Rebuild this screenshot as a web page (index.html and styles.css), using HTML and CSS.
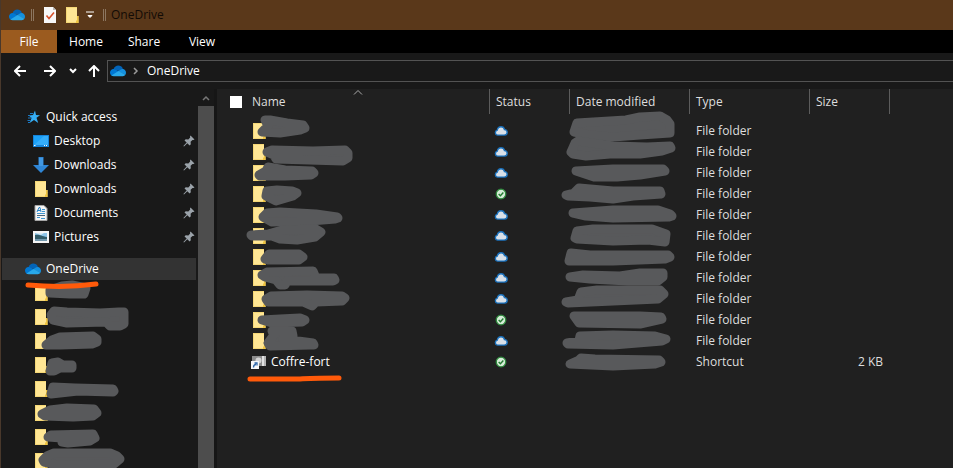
FILE: index.html
```html
<!DOCTYPE html>
<html lang="en">
<head>
    <meta charset="utf-8">
    <title>OneDrive</title>
    <link rel="stylesheet" href="styles.css">
</head>
<body>

<svg class="defs" aria-hidden="true">
    <symbol id="onedrive" viewBox="0 0 16 16">
        <path d="M3.5 6.2C4.3 3.8 6.2 2.5 8.3 2.5c2 0 3.800 1.100 4.600 3.200L9 8z" fill="#0364b8"/>
        <path d="M0 9.600C0 7.500 1.600 6 3.600 6c1 0 1.700.2 2.400.7L10 9l-8 4C.8 12.400 0 11.200 0 9.600z" fill="#0078d4"/>
        <path d="M8 8.300l3.200-2c2.600-1.200 4.800.9 4.800 3.500 0 .8-.2 1.400-.6 2z" fill="#1490df"/>
        <path d="M1.400 12.500L8.600 8l6.900 3.800c-.6.900-1.500 1.400-2.700 1.400H3.700c-.9 0-1.700-.2-2.300-.7z" fill="#28a8ea"/>
    </symbol>
    <symbol id="folder" viewBox="0 0 16 16">
        <path d="M2 0h11v9h1.500v7H2z" fill="#ffe694"/>
        <path d="M2 0h11v1H3v14h10v1H2z" fill="#f5d776"/>
        <path d="M13 9h1.500v7H12v-2l1-1z" fill="#f0c43f"/>
    </symbol>
    <symbol id="checkdoc" viewBox="0 0 16 16">
        <path d="M2 0h9l3 3v13H2z" fill="#f8f8f8"/>
        <path d="M11 0l3 3h-3z" fill="#b9b9b9"/>
        <path d="M4.500 8.500l2.500 3 5-6" fill="none" stroke="#d8512b" stroke-width="1.600"/>
    </symbol>
    <symbol id="star" viewBox="0 0 16 16">
        <path d="M10 1.500l1 4.500 4 .2-3.500 2.600 1.700 5.200L9 11l-4.400 3 1.900-4.700L4 6.500l4-.4z" fill="#35aef5"/>
        <path d="M5 4.500h3M3 6.500h3M3 9h4M2.500 11.500h3M3 13.500h2" stroke="#1b78c2"/>
    </symbol>
    <symbol id="desktop" viewBox="0 0 16 16">
        <path d="M0 2h16v12H0z" fill="#1683d8"/>
        <path d="M1 3h14v9H1z" fill="#1ba1f8"/>
        <path d="M1 12L11 3h4v9z" fill="#35adfa"/>
        <path d="M1 12.500h1.500M11 12.500h1m1 0h1" stroke="#fff"/>
    </symbol>
    <symbol id="download" viewBox="0 0 16 16">
        <path d="M5.500 0h5v8H16l-8 8-8-8h5.500z" fill="#2f86d6"/>
        <path d="M6 1h4v8H6z" fill="#4198e3"/>
    </symbol>
    <symbol id="document" viewBox="0 0 16 16">
        <path d="M2 .5h9l3 3v12H2z" fill="#f4f4f4" stroke="#a5a5a5"/>
        <path d="M4 7l2-4.500h1L8 7M4.500 5.500h3" fill="none" stroke="#2583c9"/>
        <path d="M9 4.500h3M9 6.500h3M4 8.500h8M4 12.500h3M8 13.500h4" stroke="#3e94cf"/>
        <path d="M4 10.500h8" stroke="#4b6478"/>
    </symbol>
    <symbol id="picture" viewBox="0 0 16 16">
        <path d="M0 2h16v12H0z" fill="#f4f4f4"/>
        <path d="M2 4h12v8H2z" fill="#8dc4e8"/>
        <path d="M2 6c4-1 6 1 12 2v2H2z" fill="#315b68"/>
        <path d="M2 10h12v2H2z" fill="#7298ad"/>
        <path d="M2 4h9L8 6z" fill="#d7e9f3"/>
    </symbol>
    <symbol id="pin" viewBox="0 0 12 12">
        <path d="M7.500.5l4 4-1.200.6-.8-.2-1.900 1.900.2 2.500-1.200 1.200-2.300-2.300L1 11.500l-.6-.6 3.300-3.300-2.200-2.200 1.200-1.200 2.600.2L7.200 2.500 7 1.500z" fill="#9ba3aa"/>
    </symbol>
    <symbol id="cloud" viewBox="0 0 12 12">
        <path d="M3 9.500a2.200 2.200 0 0 1-.2-4.300C3.200 3.200 4.500 2.300 6 2.300c1.500 0 2.700 1 3 2.500 1.400.1 2.300 1 2.300 2.300 0 1.400-1 2.400-2.400 2.400z" fill="#d9e0e8" stroke="#1b72bd" stroke-width="1.200"/>
    </symbol>
    <symbol id="synced" viewBox="0 0 12 12">
        <circle cx="6" cy="6" r="4.100" fill="#d5ecd7" stroke="#2f8a3d" stroke-width="1.100"/>
        <path d="M4 6l1.500 1.500L8 4.700" fill="none" stroke="#237a31" stroke-width="1.200"/>
    </symbol>
    <symbol id="shortcut" viewBox="0 0 16 16">
        <path d="M1 2h14v10H1z" fill="#8d8d8d"/>
        <path d="M11 2h2v10h-2z" fill="#e2e2e2"/>
        <path d="M13 2h2v10h-2z" fill="#b5b5b5"/>
        <circle cx="7.500" cy="6.500" r="3" fill="#d6d6d6"/>
        <path d="M0 7h8v8H0z" fill="#f7f7f7"/>
        <path d="M2.500 13.500c0-2 .8-3 2.500-3M3.500 9H6v2.500" fill="none" stroke="#2e66a8" stroke-width="1.300"/>
    </symbol>
</svg>

<div class="window">
    <header class="titlebar">
        <svg class="icon"><use href="#onedrive"/></svg>
        <span class="divider"></span>
        <button class="quick" aria-label="Properties"><svg class="icon"><use href="#checkdoc"/></svg></button>
        <button class="quick" aria-label="New folder"><svg class="icon"><use href="#folder"/></svg></button>
        <button class="customize" aria-label="Customize toolbar">
            <svg width="8" height="8" viewBox="0 0 8 8"><path d="M0 1h8M2 4.500h4L4 6.500z" fill="#fff" stroke="#fff"/></svg>
        </button>
        <span class="divider"></span>
        <h1>OneDrive</h1>
    </header>

    <nav class="ribbon">
        <button class="tab file">File</button>
        <button class="tab">Home</button>
        <button class="tab">Share</button>
        <button class="tab">View</button>
    </nav>

    <div class="toolbar">
        <button class="nav" aria-label="Back"><svg width="12" height="12" viewBox="0 0 12 12"><path d="M12 6H1M6 1L1 6l5 5"/></svg></button>
        <button class="nav" aria-label="Forward"><svg width="12" height="12" viewBox="0 0 12 12"><path d="M0 6h11M6 1l5 5-5 5"/></svg></button>
        <button class="nav recent" aria-label="Recent locations"><svg width="8" height="6" viewBox="0 0 8 6"><path d="M1 1l3 3 3-3"/></svg></button>
        <button class="nav up" aria-label="Up"><svg width="12" height="12" viewBox="0 0 12 12"><path d="M6 12V1M1 6l5-5 5 5"/></svg></button>
        <div class="address">
            <svg class="icon"><use href="#onedrive"/></svg>
            <svg class="crumb" width="6" height="8" viewBox="0 0 6 8"><path d="M1 1l3 3-3 3"/></svg>
            <a href="#">OneDrive</a>
        </div>
    </div>

    <div class="body">
        <aside class="sidebar">
            <nav class="tree">
                <a href="#" class="root"><svg class="icon"><use href="#star"/></svg>Quick access</a>
                <a href="#"><svg class="icon"><use href="#desktop"/></svg>Desktop<svg class="pin"><use href="#pin"/></svg></a>
                <a href="#"><svg class="icon"><use href="#download"/></svg>Downloads<svg class="pin"><use href="#pin"/></svg></a>
                <a href="#"><svg class="icon"><use href="#folder"/></svg>Downloads<svg class="pin"><use href="#pin"/></svg></a>
                <a href="#"><svg class="icon"><use href="#document"/></svg>Documents<svg class="pin"><use href="#pin"/></svg></a>
                <a href="#"><svg class="icon"><use href="#picture"/></svg>Pictures<svg class="pin"><use href="#pin"/></svg></a>
                <a href="#" class="root selected"><svg class="icon"><use href="#onedrive"/></svg>OneDrive</a>
                <a href="#" aria-label="Folder"><svg class="icon"><use href="#folder"/></svg></a>
                <a href="#" aria-label="Folder"><svg class="icon"><use href="#folder"/></svg></a>
                <a href="#" aria-label="Folder"><svg class="icon"><use href="#folder"/></svg></a>
                <a href="#" aria-label="Folder"><svg class="icon"><use href="#folder"/></svg></a>
                <a href="#" aria-label="Folder"><svg class="icon"><use href="#folder"/></svg></a>
                <a href="#" aria-label="Folder"><svg class="icon"><use href="#folder"/></svg></a>
                <a href="#" aria-label="Folder"><svg class="icon"><use href="#folder"/></svg></a>
                <a href="#" aria-label="Folder"><svg class="icon"><use href="#folder"/></svg></a>
            </nav>
            <div class="scrollbar">
                <button aria-label="Scroll up"><svg width="8" height="6" viewBox="0 0 8 6"><path d="M1 5l3-3 3 3"/></svg></button>
                <div class="thumb"></div>
            </div>
        </aside>

        <main class="files">
            <table>
                <colgroup>
                    <col class="c-name"><col class="c-status"><col class="c-date"><col class="c-type"><col class="c-size"><col>
                </colgroup>
                <thead>
                    <tr>
                        <th class="name">
                            <div class="head"><input type="checkbox" id="all" aria-label="Select all"><label for="all">Name</label></div>
                            <svg class="sort" width="10" height="5" viewBox="0 0 10 5"><path d="M1 4.500l4-4 4 4"/></svg>
                        </th>
                        <th>Status</th>
                        <th>Date modified</th>
                        <th>Type</th>
                        <th>Size</th>
                        <td></td>
                    </tr>
                </thead>
                <tbody>
                    <tr><td class="name"><svg class="icon"><use href="#folder"/></svg></td><td><svg class="state"><use href="#cloud"/></svg></td><td></td><td>File folder</td><td></td><td></td></tr>
                    <tr><td class="name"><svg class="icon"><use href="#folder"/></svg></td><td><svg class="state"><use href="#cloud"/></svg></td><td></td><td>File folder</td><td></td><td></td></tr>
                    <tr><td class="name"><svg class="icon"><use href="#folder"/></svg></td><td><svg class="state"><use href="#cloud"/></svg></td><td></td><td>File folder</td><td></td><td></td></tr>
                    <tr><td class="name"><svg class="icon"><use href="#folder"/></svg></td><td><svg class="state"><use href="#synced"/></svg></td><td></td><td>File folder</td><td></td><td></td></tr>
                    <tr><td class="name"><svg class="icon"><use href="#folder"/></svg></td><td><svg class="state"><use href="#cloud"/></svg></td><td></td><td>File folder</td><td></td><td></td></tr>
                    <tr><td class="name"><svg class="icon"><use href="#folder"/></svg></td><td><svg class="state"><use href="#cloud"/></svg></td><td></td><td>File folder</td><td></td><td></td></tr>
                    <tr><td class="name"><svg class="icon"><use href="#folder"/></svg></td><td><svg class="state"><use href="#cloud"/></svg></td><td></td><td>File folder</td><td></td><td></td></tr>
                    <tr><td class="name"><svg class="icon"><use href="#folder"/></svg></td><td><svg class="state"><use href="#cloud"/></svg></td><td></td><td>File folder</td><td></td><td></td></tr>
                    <tr><td class="name"><svg class="icon"><use href="#folder"/></svg></td><td><svg class="state"><use href="#cloud"/></svg></td><td></td><td>File folder</td><td></td><td></td></tr>
                    <tr><td class="name"><svg class="icon"><use href="#folder"/></svg></td><td><svg class="state"><use href="#synced"/></svg></td><td></td><td>File folder</td><td></td><td></td></tr>
                    <tr><td class="name"><svg class="icon"><use href="#folder"/></svg></td><td><svg class="state"><use href="#cloud"/></svg></td><td></td><td>File folder</td><td></td><td></td></tr>
                    <tr><td class="name"><svg class="icon"><use href="#shortcut"/></svg><span>Coffre-fort</span></td><td><svg class="state"><use href="#synced"/></svg></td><td></td><td>Shortcut</td><td class="size">2 KB</td><td></td></tr>
                </tbody>
            </table>
        </main>
    </div>

    <!-- marker strokes drawn over the window -->
    <svg class="marks" aria-hidden="true">
        <g class="redact">
            <!-- sidebar folders -->
            <path d="M50 290L62 286 72 285 86 288 84 294 70 294 50 293z"/>
            <path d="M51 315L54 311 67 312 100 313 119 312 124 312 124 324 120 326 110 326 106 322 67 323 53 320z"/>
            <path d="M46 345L52 340 60 337 93 336 97 339 97 342 92 344 60 345z"/>
            <path d="M50 371L52 363 58 362 63 365 72 365 72 368 60 368 54 371z"/>
            <path d="M51 394L53 387 75 388 113 389 114 391 113 392 78 391z"/>
            <path d="M42 414L50 410 67 408 94 409 97 413 93 416 73 417 45 416z"/>
            <path d="M48 437L51 435 93 434 95 438 90 441 68 443 62 442 62 438z"/>
            <path d="M43 460L47 456 54 453 110 453 117 456 120 459 114 464 57 465 44 462z"/>
            <!-- names -->
            <path d="M262 132L268 126 265 120 270 120 287 123 303 125 305 128 300 130 280 133z"/>
            <path d="M267 152L272 150 313 151 345 150 348 153 348 158 343 161 276 159 274 155z"/>
            <path d="M259 175L266 171 268 167 285 170 312 171 314 173 311 175 285 176 260 176z"/>
            <path d="M266 196L267 191 277 190 292 191 297 193 293 196 276 201z"/>
            <path d="M263 217L267 213 280 212 316 214 337 217 338 218 335 219 310 221 272 222z"/>
            <path d="M251 235L268 234 282 230 316 229 321 232 315 237 297 240 280 239 272 236 252 236z"/>
            <path d="M265 259L269 254 299 254 303 257 299 260 268 260z"/>
            <path d="M262 275L267 272 313 271 316 278 334 278 335 280 333 281 287 281 285 285 280 285 276 280 265 277z"/>
            <path d="M266 299L271 296 307 295 342 296 345 298 342 301 316 302 312 306 303 302 268 302z"/>
            <path d="M262 320L280 319 300 318 305 320 302 322 272 323z"/>
            <path d="M272 331L292 331 293 336 283 339 313 343 314 345 310 345 270 346 268 343 274 335z"/>
            <!-- dates -->
            <path d="M574 132L577 123 626 120 640 117 660 116 667 120 670 124 670 133 640 135 613 137 590 135z"/>
            <path d="M571 152L575 143 578 141 613 146 647 147 670 146 671 148 662 151 640 154 610 154 586 156 573 154z"/>
            <path d="M576 171L613 169 663 169 665 171 640 175 617 177 594 177z"/>
            <path d="M566 195L574 193 579 188 613 191 660 191 661 194 633 196 613 199 590 197 568 196z"/>
            <path d="M573 213L613 210 658 210 670 214 672 216 669 217 613 218 586 216z"/>
            <path d="M575 238L577 231 593 229 652 229 666 234 665 242 648 240 613 241 577 239z"/>
            <path d="M569 261L571 253 590 255 613 255 668 255 670 257 665 259 613 261z"/>
            <path d="M570 277L583 275 620 276 640 273 663 273 663 277 658 281 628 281 590 279z"/>
            <path d="M566 302L578 300 581 292 597 290 660 290 664 294 658 299 613 301 568 303z"/>
            <path d="M574 316L640 316 661 317 662 319 640 324 579 323z"/>
            <path d="M567 343L579 341 580 336 613 335 655 336 666 339 662 341 613 345 568 344z"/>
            <path d="M570 364L579 360 581 358 595 359 659 360 661 362 655 364 613 366z"/>
        </g>
        <g class="underline">
            <path d="M28 285C50 287 74 287 96 284"/>
            <path d="M250 379H300C310 378 312 378 339 378"/>
        </g>
    </svg>
</div>

</body>
</html>
```

FILE: styles.css
```css
* {
    box-sizing: border-box;
}
body {
    margin: 0;
    background: #fff;
    color: #fff;
    font: 12px/16px "Open Sans", "Noto Sans", sans-serif;
}
button {
    display: flex;
    align-items: center;
    justify-content: center;
    margin: 0;
    padding: 0;
    border: 0;
    background: none;
    color: inherit;
    font: inherit;
}
a {
    color: inherit;
    text-decoration: none;
}
svg {
    flex: none;
}
.defs {
    position: absolute;
    width: 0;
    height: 0;
}
.icon {
    display: block;
    width: 16px;
    height: 16px;
}
.window {
    position: relative;
    display: flex;
    flex-direction: column;
    height: calc(100vh - 1px);
    overflow: hidden;
    border-left: 1px solid #49382b;
    background: #191919;
}

/* title bar */
.titlebar {
    display: flex;
    align-items: center;
    height: 30px;
    padding-left: 8px;
    background: #5a381a;
}
.divider {
    width: 3px;
    height: 12px;
    margin: 0 5px 0 6px;
    border: 1px solid #8c7660;
    border-width: 0 1px;
}
.quick {
    width: 22px;
    height: 24px;
}
.customize {
    width: 14px;
    height: 24px;
}
.titlebar h1 {
    margin: 0;
    color: #120b05;
    font-size: 12px;
    font-weight: normal;
}

/* ribbon tabs */
.ribbon {
    display: flex;
    height: 23px;
    background: #000;
}
.tab {
    width: 58px;
}
.tab.file {
    width: 56px;
    background: #9b5b1f;
}

/* navigation and address */
.toolbar {
    display: flex;
    align-items: center;
    height: 36px;
    padding-left: 4px;
}
.nav {
    width: 30px;
    height: 22px;
}
.nav.recent {
    width: 16px;
}
.nav.up {
    width: 26px;
}
.nav path {
    fill: none;
    stroke: #fff;
    stroke-width: 2;
}
.address {
    display: flex;
    flex: 1;
    align-items: center;
    height: 22px;
    padding-left: 2px;
    border: 1px solid #535353;
    border-right: 0;
}
.crumb {
    margin: 0 8px 0 7px;
}
.crumb path {
    fill: none;
    stroke: #9a9a9a;
    stroke-width: 1.5;
}

.body {
    display: flex;
    flex: 1;
    min-height: 0;
}

/* folder tree */
.sidebar {
    display: flex;
    width: 216px;
    border-right: 3px solid #161616;
}
.tree {
    flex: 1;
    padding: 16px 2px 0 1px;
    overflow: hidden;
}
.tree a {
    display: flex;
    align-items: center;
    gap: 5px;
    height: 24px;
    padding-left: 31px;
}
.tree .root {
    padding-left: 23px;
}
.tree .selected {
    margin-top: 8px;
    border: 1px solid #191919;
    border-width: 1px 0;
    background: #333;
}
.pin {
    width: 12px;
    height: 12px;
    margin: 0 1px 0 auto;
}
.scrollbar {
    display: flex;
    flex-direction: column;
    width: 16px;
}
.scrollbar button {
    height: 17px;
}
.scrollbar path {
    fill: none;
    stroke: #777;
    stroke-width: 1.5;
}
.thumb {
    flex: 1;
    background: #4d4d4d;
}

/* file list */
.files {
    flex: 1;
    min-width: 0;
    overflow: hidden;
    background: #202020;
}
table {
    width: 100%;
    table-layout: fixed;
    border-collapse: separate;
    border-spacing: 0;
    color: #dedede;
}
.c-name {
    width: 273px;
}
.c-status,
.c-size {
    width: 80px;
}
.c-date,
.c-type {
    width: 120px;
}
th,
td {
    padding: 0 7px 0 6px;
    text-align: left;
    font-weight: normal;
}
th {
    position: relative;
    height: 25px;
    border-right: 1px solid #5c5c5c;
}
tbody::before {
    content: "";
    display: block;
    height: 6px;
}
tbody td {
    height: 21px;
}
.head {
    display: flex;
    align-items: center;
    gap: 10px;
    padding-left: 7px;
}
.head input {
    appearance: none;
    width: 12px;
    height: 12px;
    margin: 0;
    background: #fff;
}
.sort {
    position: absolute;
    top: 1px;
    left: 50%;
}
.sort path {
    fill: none;
    stroke: #aaa;
}
td.name {
    padding-left: 34px;
    color: #fff;
}
td.name .icon,
td.name span {
    display: inline-block;
    vertical-align: middle;
}
td.name span {
    margin-left: 4px;
}
.state {
    display: block;
    width: 14px;
    height: 14px;
    margin-left: -2px;
}
.size {
    text-align: right;
}

/* marker strokes */
.marks {
    position: absolute;
    top: 0;
    left: -1px;
    width: 100%;
    height: 100%;
    pointer-events: none;
}
.redact path {
    fill: #58595b;
    stroke: #58595b;
    stroke-width: 9;
    stroke-linejoin: round;
}
.underline path {
    fill: none;
    stroke: #ff5a0a;
    stroke-width: 5;
    stroke-linecap: round;
}
```
